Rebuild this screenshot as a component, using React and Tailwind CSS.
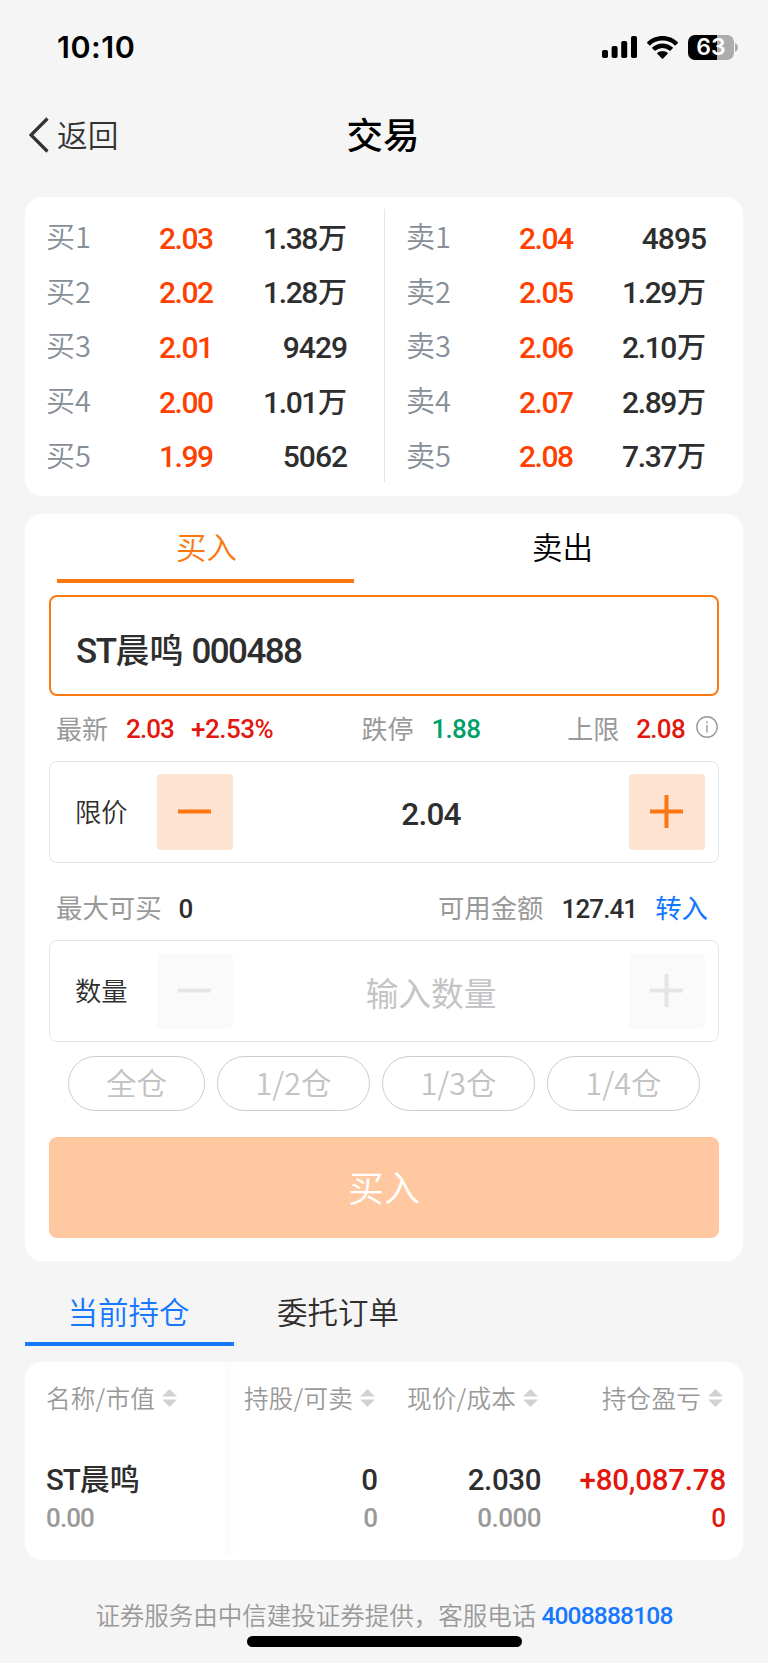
import React from "react";

const CJK = "font-['Noto_Sans_CJK_SC',sans-serif]";
const NUM = "font-['Roboto','Noto_Sans_CJK_SC',sans-serif] font-medium";

const bids = [
  ["买1", "2.03", "1.38", "万"],
  ["买2", "2.02", "1.28", "万"],
  ["买3", "2.01", "9429", ""],
  ["买4", "2.00", "1.01", "万"],
  ["买5", "1.99", "5062", ""],
];
const asks = [
  ["卖1", "2.04", "4895", ""],
  ["卖2", "2.05", "1.29", "万"],
  ["卖3", "2.06", "2.10", "万"],
  ["卖4", "2.07", "2.89", "万"],
  ["卖5", "2.08", "7.37", "万"],
];

function StatusBar() {
  return (
    <div className="flex h-[94px] items-center pl-[57px] pr-[30px]">
      <span className="font-['Inter',sans-serif] text-[30.500px] font-semibold leading-none tracking-[0.5px] text-black">
        10:10
      </span>
      <div className="ml-auto flex items-center">
        <svg width="36" height="22" viewBox="0 0 36 22" className="mr-[9px]">
          <rect x="0" y="14" width="6" height="8" rx="1.8" />
          <rect x="9.6" y="10" width="6" height="12" rx="1.8" />
          <rect x="19.2" y="5" width="6" height="17" rx="1.8" />
          <rect x="29" y="0" width="6" height="22" rx="1.8" />
        </svg>
        <svg width="31" height="23" viewBox="0 0 31 23" className="mr-[10px]">
          <path d="M15.5 0C21.4 0 26.8 2.3 30.7 6.1a.8.8 0 0 1 0 1.1l-2 2a.8.8 0 0 1-1.1 0A17.4 17.4 0 0 0 15.5 4.6 17.4 17.4 0 0 0 3.4 9.2a.8.8 0 0 1-1.1 0l-2-2a.8.8 0 0 1 0-1.1C4.200 2.300 9.600 0 15.500 0z" />
          <path d="M15.500 7.500c3.900 0 7.400 1.400 10.100 3.800a.8.8 0 0 1 0 1.200l-2.100 2a.8.8 0 0 1-1.100 0 10.400 10.400 0 0 0-13.800 0 .8.8 0 0 1-1.100 0l-2.100-2a.8.8 0 0 1 0-1.200A15 15 0 0 1 15.500 7.500z" />
          <path d="M15.500 15c1.900 0 3.700.7 5 1.800a.8.8 0 0 1 0 1.200l-4.400 4.400a.8.8 0 0 1-1.200 0L10.500 18a.8.8 0 0 1 0-1.200c1.300-1.100 3.100-1.800 5-1.800z" />
        </svg>
        <div className="flex h-[25px] w-[46px] items-center justify-center rounded-[7px] bg-[linear-gradient(90deg,#000_63%,#acacac_63%)]">
          <span className="font-['Inter',sans-serif] text-[23px] font-semibold leading-none text-white">63</span>
        </div>
        <svg width="3" height="9" viewBox="0 0 3 9" className="ml-[1px]">
          <path d="M0 0C1.800.8 3 2.500 3 4.500S1.800 8.200 0 9z" fill="#acacac" />
        </svg>
      </div>
    </div>
  );
}

function BookSide({ rows, className }) {
  return (
    <div className={`flex shrink-0 flex-col pt-[14px] ${className}`}>
      {rows.map(([label, price, vol, unit]) => (
        <div key={label} className="flex h-[54.6px] items-center">
          <span className={`${CJK} relative top-[-2.500px] left-[-1px] w-[112px] text-[29px] font-[350] leading-none text-[#868e98]`}>{label}</span>
          <span className={`${NUM} relative top-[0.500px] text-[30px] leading-none tracking-[-1.5px] text-[#ff4000]`}>{price}</span>
          <span className={`${NUM} relative top-[0.500px] ml-auto flex items-baseline text-[30px] leading-none text-[#2e2e2e]`}>
            <span className={unit ? "tracking-[-1.400px]" : "tracking-[-1px]"}>{vol}</span>
            {unit && <span className="ml-px text-[29px] leading-none">{unit}</span>}
          </span>
        </div>
      ))}
    </div>
  );
}

function StepButton({ plus, disabled }) {
  return (
    <button
      className={`flex h-[76px] w-[76px] shrink-0 items-center justify-center rounded-[4px] ${
        disabled ? "bg-[#fafafa] text-[#e5e5e5]" : "bg-[#fee4d0] text-[#fc7710]"
      }`}
    >
      <svg width="33" height="33" viewBox="0 0 33 33" className="mr-[2px] mb-[2px]" stroke="currentColor" strokeWidth="4">
        <path d="M0 16.500H33" />
        {plus && <path d="M16.500 0V33" />}
      </svg>
    </button>
  );
}

function Stepper({ label, disabled, children }) {
  return (
    <div className="mx-[24px] flex h-[102px] shrink-0 items-center rounded-[8px] border border-[#e5e5e5] pl-[25px] pr-[13px]">
      <span className={`${CJK} relative top-[-1px] w-[82px] text-[26.300px] leading-none font-[350] text-[#2e2e2e]`}>{label}</span>
      <StepButton disabled={disabled} />
      <div className="flex flex-1 items-center justify-center">{children}</div>
      <StepButton plus disabled={disabled} />
    </div>
  );
}

function Sort() {
  return (
    <svg width="15" height="18" viewBox="0 0 15 18" fill="#d2d2d2" className="ml-[7px]">
      <path d="M7.500 0L15 7.600H0zM7.500 18L0 10.400H15z" />
    </svg>
  );
}

function Head({ children, className }) {
  return (
    <div className={`flex h-[72px] items-center ${className}`}>
      <span className={`${CJK} relative top-[-1px] text-[24.600px] font-[350] leading-none tracking-[0.2px] whitespace-nowrap text-[#999]`}>{children}</span>
      <Sort />
    </div>
  );
}

export default function App() {
  return (
    <div className={`${CJK} relative flex h-[1663px] w-[768px] flex-col overflow-hidden bg-[#f5f5f5]`}>
      <StatusBar />

      <header className="grid h-[103px] grid-cols-3 items-center px-[29px] pb-[21px]">
        <div className="flex items-center text-[#333]">
          <svg width="20" height="36" viewBox="0 0 20 36" fill="none" stroke="currentColor" strokeWidth="3.200">
            <path d="M18.500 1.500L2 18l16.500 16.500" />
          </svg>
          <span className="relative top-[-1px] ml-[8px] text-[30.700px] font-[350] leading-none">返回</span>
        </div>
        <h1 className="relative top-[-1px] left-[-1px] text-center text-[36.500px] font-medium leading-none text-black">交易</h1>
      </header>

      <section className="mx-[25px] flex h-[299px] shrink-0 rounded-[17px] bg-white">
        <BookSide rows={bids} className="w-[359px] pl-[22px] pr-[37px]" />
        <div className="mt-[12px] h-[273px] w-px shrink-0 bg-[#e5e5e5]" />
        <BookSide rows={asks} className="w-[358px] pl-[22px] pr-[37px]" />
      </section>

      <section className="mx-[25px] mt-[18px] flex h-[747px] shrink-0 flex-col rounded-[17px] bg-white">
        <div className="flex h-[81px] shrink-0 pl-[4px]">
          <div className="flex w-[353px] flex-col items-center">
            <span className="relative left-[1px] flex h-[65px] items-center text-[30.500px] font-[350] leading-none text-[#fc7710]">买入</span>
            <div className="h-[4px] w-[297px] bg-[#fc7710]" />
          </div>
          <div className="flex flex-1 justify-center">
            <span className="flex h-[65px] items-center text-[30.500px] leading-none font-[350] text-black">卖出</span>
          </div>
        </div>

        <div className="mx-[24px] flex h-[101px] shrink-0 items-center rounded-[8px] border-2 border-[#fb7a14] pl-[25px] pt-[11px]">
          <div className={`${NUM} flex items-baseline text-[35px] leading-none text-[#2e2e2e]`}>
            <span className="tracking-[-1.500px]">ST</span>
            <span className="text-[34px] leading-none">晨鸣</span>
            <span className="ml-[8px] tracking-[-1.600px]">000488</span>
          </div>
        </div>

        <div className="mx-[31px] flex h-[65px] shrink-0 items-center text-[26px] leading-none text-[#999]">
          <span className="relative top-[-1px]">最新</span>
          <span className={`${NUM} ml-[18px] tracking-[-0.900px] text-[#e3170d]`}>2.03</span>
          <span className={`${NUM} ml-[17px] tracking-[-0.500px] text-[#e3170d]`}>+2.53%</span>
          <span className="relative top-[-1px] ml-auto">跌停</span>
          <span className={`${NUM} ml-[18px] tracking-[-0.700px] text-[#00a06a]`}>1.88</span>
          <span className="relative top-[-1px] ml-[87px]">上限</span>
          <span className={`${NUM} ml-[17px] tracking-[-0.700px] text-[#e3170d]`}>2.08</span>
          <svg width="22" height="22" viewBox="0 0 22 22" fill="none" stroke="#999" strokeWidth="1.400" className="mr-[-6px] mb-[4px] ml-[11px]">
            <circle cx="11" cy="11" r="10.200" />
            <path d="M11 9v7.500M11 5.200v2" />
          </svg>
        </div>

        <Stepper label="限价">
          <span className={`${NUM} relative top-[3px] text-[31.500px] leading-none tracking-[-0.800px] text-[#2e2e2e]`}>2.04</span>
        </Stepper>

        <div className="mx-[31px] flex h-[77px] shrink-0 items-center pt-[15px] text-[26.400px] leading-none text-[#999]">
          <span className="relative top-[-2px]">最大可买</span>
          <span className={`${NUM} ml-[17px] text-[26px] text-[#2e2e2e]`}>0</span>
          <span className="relative top-[-2px] ml-auto">可用金额</span>
          <span className={`${NUM} ml-[18px] text-[26px] tracking-[-0.900px] text-[#2e2e2e]`}>127.41</span>
          <span className="relative top-[-2px] mr-[4px] ml-[18px] text-[#0f76ff]">转入</span>
        </div>

        <Stepper label="数量" disabled>
          <span className="relative top-[1px] text-[32.700px] leading-none text-[#c4c4c6]">输入数量</span>
        </Stepper>

        <div className="mt-[14px] flex justify-between px-[43px] text-[30.500px] font-[350] leading-none text-[#c3c3c3]">
          {["全仓", "1/2仓", "1/3仓", "1/4仓"].map((t, i) => (
            <button key={t} className={`flex h-[55px] items-center justify-center rounded-full border border-[#ccc] ${i === 0 ? "w-[137px]" : "w-[153px]"}`}>
              <span className="relative top-[-1px]">{t}</span>
            </button>
          ))}
        </div>

        <button className="mx-[24px] mt-[26px] flex h-[101px] shrink-0 items-center justify-center rounded-[8px] bg-[#ffc8a0] pb-[4px] text-[36px] font-[350] leading-none text-white">
          买入
        </button>
      </section>

      <nav className="mx-[25px] flex h-[101px] shrink-0 text-[30.500px] font-[350] leading-none">
        <div className="flex w-[209px] flex-col text-[#1677ff]">
          <span className="relative left-[-1px] flex h-[81px] items-center justify-center pt-[19px]">当前持仓</span>
          <div className="h-[4px] bg-[#1677ff]" />
        </div>
        <span className="ml-[43px] flex h-[81px] items-center pt-[19px] text-[#2e2e2e]">委托订单</span>
      </nav>

      <section className="mx-[25px] flex h-[198px] shrink-0 rounded-[17px] bg-white">
        <div className="flex w-[196px] flex-col pl-[21px]">
          <Head>名称/市值</Head>
          <div className={`${NUM} mt-[30px] flex h-[32px] items-baseline text-[29.500px] leading-[32px] text-[#2e2e2e]`}>
            <span className="tracking-[-1px]">ST</span>
            <span className="text-[30px] leading-[32px]">晨鸣</span>
          </div>
          <span className={`${NUM} mt-[7px] text-[26px] leading-[30px] tracking-[-0.900px] text-[#999]`}>0.00</span>
        </div>
        <div className="h-[194px] w-[14px] bg-[linear-gradient(90deg,#fff,#fbfbfb_50%,#fff)]" />
        <div className="flex w-[143px] flex-col">
          <Head className="justify-end pr-[3px]">持股/可卖</Head>
          <span className={`${NUM} mt-[30px] text-right text-[29.500px] leading-[32px] text-[#2e2e2e]`}>0</span>
          <span className={`${NUM} mt-[7px] text-right text-[26px] leading-[30px] text-[#999]`}>0</span>
        </div>
        <div className="flex w-[163px] flex-col">
          <Head className="justify-end pr-[3px]">现价/成本</Head>
          <span className={`${NUM} mt-[30px] text-right text-[29.500px] leading-[32px] tracking-[-0.400px] text-[#2e2e2e]`}>2.030</span>
          <span className={`${NUM} mt-[7px] text-right text-[26px] leading-[30px] tracking-[-0.500px] text-[#999]`}>0.000</span>
        </div>
        <div className="flex w-[185px] flex-col">
          <Head className="justify-end pr-[3px]">持仓盈亏</Head>
          <span className={`${NUM} mt-[30px] text-right text-[29.500px] leading-[32px] tracking-[-0.200px] text-[#e3170d]`}>+80,087.78</span>
          <span className={`${NUM} mt-[7px] text-right text-[26px] leading-[30px] text-[#e3170d]`}>0</span>
        </div>
      </section>

      <footer className="flex flex-col items-center pt-[38px]">
        <div className="flex h-[34px] items-center leading-none whitespace-nowrap">
          <span className="text-[24.500px] font-[350] text-[#999]">证券服务由中信建投证券提供，客服电话</span>
          <span className={`${NUM} relative top-px ml-[5px] text-[24.500px] tracking-[-0.800px] text-[#1677ff]`}>4008888108</span>
        </div>
        <div className="mt-[4px] h-[11px] w-[275px] rounded-full bg-black" />
      </footer>
    </div>
  );
}
